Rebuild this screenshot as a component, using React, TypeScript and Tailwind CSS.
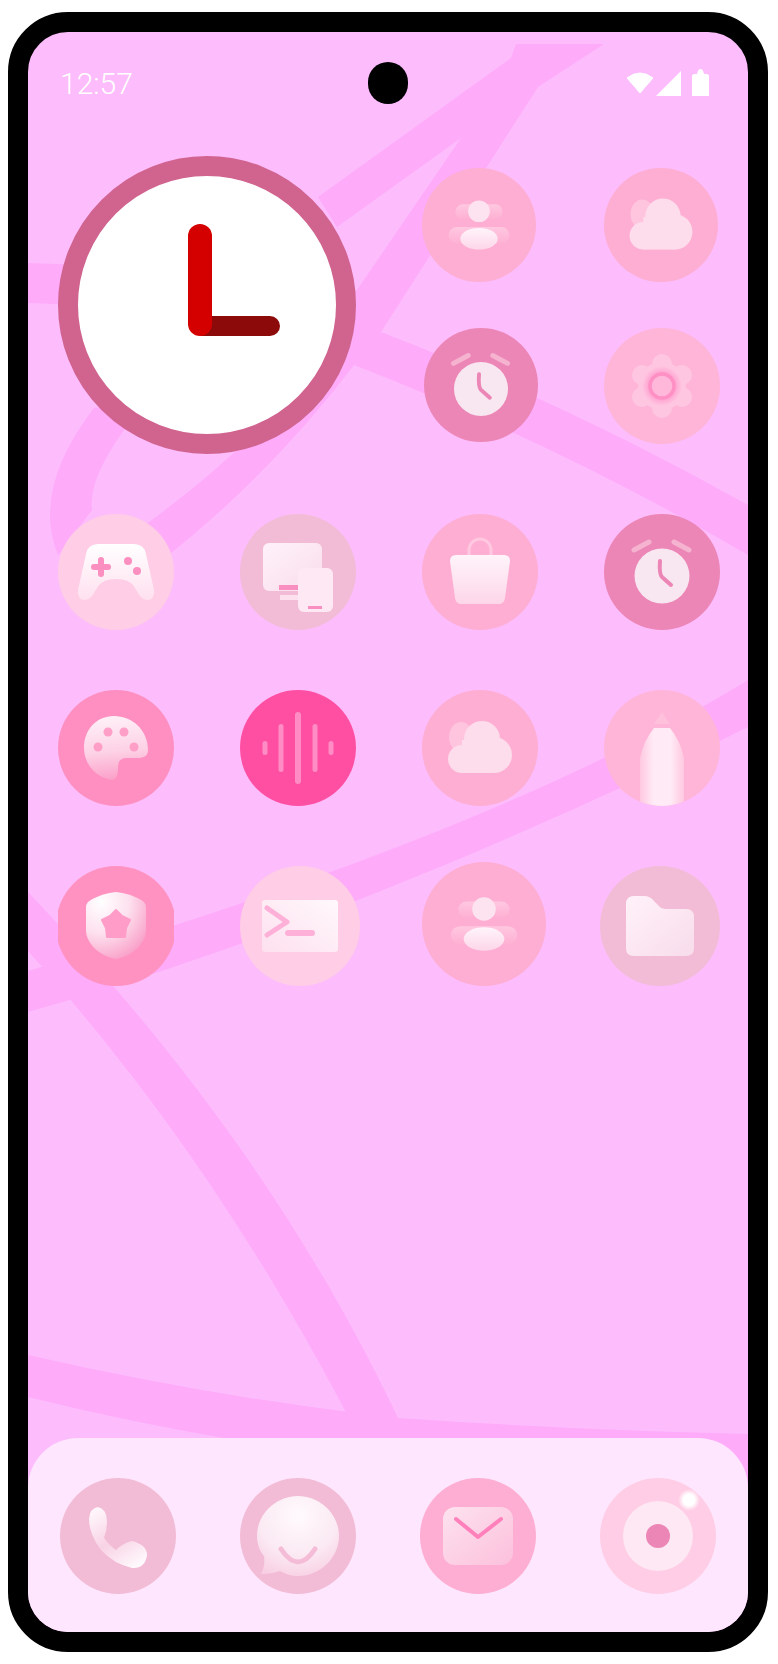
import React from "react"

type BadgeProps = {
  className: string
  box?: number
  children?: React.ReactNode
}

// round app icon, glyphs are drawn in a 116 box (120 for the slightly larger ones)
const Badge: React.FC<BadgeProps> = ({ className, box = 116, children }) => (
  <div className={`shrink-0 rounded-full overflow-hidden ${className}`}>
    <svg viewBox={`0 0 ${box} ${box}`} className="w-full h-full blur-[0.7px]">
      {children}
    </svg>
  </div>
)

const Gradients = () => (
  <svg className="absolute w-0 h-0">
    <defs>
      <linearGradient id="softDown" x1="0" y1="0" x2="0" y2="1">
        <stop offset="0" stopColor="#fff4fa" />
        <stop offset="1" stopColor="#fdd6e9" />
      </linearGradient>
      <linearGradient id="softDiag" x1="0" y1="0" x2="1" y2="1">
        <stop offset="0" stopColor="#fff2f9" />
        <stop offset="1" stopColor="#f8dceb" />
      </linearGradient>
      <linearGradient id="gameFill" x1="0" y1="0" x2="0" y2="1">
        <stop offset="0" stopColor="#ffffff" />
        <stop offset="1" stopColor="#ffe0ef" />
      </linearGradient>
      <linearGradient id="paletteFill" x1="0.4" y1="0" x2="0.5" y2="1">
        <stop offset="0" stopColor="#fff0f7" />
        <stop offset="0.55" stopColor="#fdd2e6" />
        <stop offset="1" stopColor="#fb9fc8" />
      </linearGradient>
      <linearGradient id="penFill" x1="0" y1="0" x2="1" y2="0">
        <stop offset="0" stopColor="#ffc8e0" />
        <stop offset="0.3" stopColor="#ffeaf5" />
        <stop offset="0.7" stopColor="#ffeaf5" />
        <stop offset="1" stopColor="#ffc8e0" />
      </linearGradient>
      <radialGradient id="shieldFill" cx="0.25" cy="0.15" r="0.95">
        <stop offset="0" stopColor="#ffffff" />
        <stop offset="0.5" stopColor="#fde0ee" />
        <stop offset="1" stopColor="#f99cc6" />
      </radialGradient>
      <linearGradient id="termFill" x1="1" y1="0" x2="0" y2="1">
        <stop offset="0" stopColor="#fff8fc" />
        <stop offset="1" stopColor="#fde0ee" />
      </linearGradient>
      <linearGradient id="handset" x1="0.2" y1="0" x2="0.8" y2="1">
        <stop offset="0" stopColor="#fff6fb" />
        <stop offset="0.5" stopColor="#f8d2e5" />
        <stop offset="1" stopColor="#fffafd" />
      </linearGradient>
      <radialGradient id="bubble" cx="0.5" cy="0.25" r="0.8">
        <stop offset="0" stopColor="#fffafd" />
        <stop offset="0.6" stopColor="#fbeaf3" />
        <stop offset="1" stopColor="#f8cfe3" />
      </radialGradient>
      <linearGradient id="mailFill" x1="0" y1="0" x2="1" y2="1">
        <stop offset="0" stopColor="#fde2ef" />
        <stop offset="1" stopColor="#fcc0dc" />
      </linearGradient>
      <radialGradient id="ringGlow">
        <stop offset="0.45" stopColor="#ff8fc6" />
        <stop offset="1" stopColor="#ff8fc6" stopOpacity="0" />
      </radialGradient>
      <radialGradient id="flash">
        <stop offset="0.5" stopColor="#ffffff" />
        <stop offset="1" stopColor="#ffffff" stopOpacity="0" />
      </radialGradient>
      <linearGradient id="sideFade" x1="0" y1="0" x2="0" y2="1">
        <stop offset="0" stopColor="#ffc8e1" />
        <stop offset="1" stopColor="#feb0d3" />
      </linearGradient>
    </defs>
  </svg>
)

const PersonGlyph = () => (
  <g>
    <rect x="34" y="37" width="48" height="15" rx="7.5" fill="url(#sideFade)" />
    <rect x="27" y="60" width="62" height="17" rx="8.5" fill="url(#sideFade)" />
    <circle cx="58" cy="44" r="11" fill="#fde3f0" />
    <ellipse cx="58" cy="72" rx="19" ry="11" fill="url(#softDown)" />
  </g>
)

const CloudGlyph = () => (
  <g>
    <ellipse cx="39" cy="47" rx="12" ry="15" fill="#ffc4de" />
    <g fill="#fddcec">
      <circle cx="60" cy="49" r="18" />
      <circle cx="72" cy="65" r="18" />
      <circle cx="40" cy="69" r="14" />
      <rect x="40" y="50" width="32" height="33" />
    </g>
  </g>
)

const AlarmGlyph = () => (
  <g>
    <path d="M30 36 L45 28 M70 28 L85 36" stroke="#f5b3d0" strokeWidth="5" strokeLinecap="round" fill="none" />
    <circle cx="58" cy="62" r="27.5" fill="#f8e6f0" />
    <path d="M56 47 Q55 60 58 63 L67 71" stroke="#ec86b6" strokeWidth="4" strokeLinecap="round" fill="none" />
  </g>
)

const FlowerGlyph = () => (
  <g>
    <g fill="#ffc6e1">
      <circle cx="58" cy="58" r="24" />
      <circle cx="58" cy="36" r="10" />
      <circle cx="58" cy="80" r="10" />
      <circle cx="38" cy="47" r="10" />
      <circle cx="78" cy="47" r="10" />
      <circle cx="38" cy="69" r="10" />
      <circle cx="78" cy="69" r="10" />
    </g>
    <circle cx="58" cy="58" r="20" fill="url(#ringGlow)" />
    <circle cx="58" cy="58" r="12" fill="#ffb8da" stroke="#ff90c6" strokeWidth="3.5" />
  </g>
)

const GameGlyph = () => (
  <g>
    <path
      d="M40 30 H76 Q86 30 88 40 L96 76 Q97 86 89 86 Q84 86 80 79 L75 71 Q70 65 58 65 Q46 65 41 71 L36 79 Q32 86 27 86 Q19 86 20 76 L28 40 Q30 30 40 30 Z"
      fill="url(#gameFill)"
    />
    <path d="M43 46 V60 M36 53 H50" stroke="#fb8fc0" strokeWidth="6" strokeLinecap="round" />
    <circle cx="70" cy="47" r="4" fill="#fb8fc0" />
    <circle cx="79" cy="57" r="4" fill="#fb8fc0" />
  </g>
)

const DevicesGlyph = () => (
  <g>
    <rect x="23" y="29" width="59" height="48" rx="6" fill="url(#softDiag)" />
    <rect x="39" y="71" width="20" height="5" fill="#f98fc0" />
    <rect x="40" y="81" width="20" height="5" fill="#fde0ee" />
    <rect x="58" y="54" width="35" height="44" rx="6" fill="#fde8f3" />
    <rect x="68" y="92" width="14" height="3" fill="#f98fc0" />
  </g>
)

const BagGlyph = () => (
  <g>
    <path d="M47 42 V36 A11 11 0 0 1 69 36 V42" stroke="#ffc8e0" strokeWidth="3" fill="none" />
    <path d="M34 41 H82 Q88 41 88 47 L83 84 Q82 90 77 90 H39 Q34 90 33 84 L28 47 Q28 41 34 41 Z" fill="url(#softDown)" />
  </g>
)

const PaletteGlyph = () => (
  <g>
    <path
      d="M56 26 C74 26 90 40 90 60 C90 66 86 68 80 68 L68 68 C62 68 60 72 60 78 C60 85 58 90 54 90 C38 88 26 74 26 58 C26 40 38 26 56 26 Z"
      fill="url(#paletteFill)"
    />
    <g fill="#ff9fc8">
      <circle cx="50" cy="42" r="4.5" />
      <circle cx="66" cy="42" r="4.5" />
      <circle cx="40" cy="57" r="4.5" />
      <circle cx="76" cy="57" r="4.5" />
    </g>
  </g>
)

const VoiceGlyph = () => (
  <g fill="#ff8cc4">
    <rect x="22.5" y="51" width="5" height="14" rx="2.5" />
    <rect x="38.5" y="34" width="5" height="48" rx="2.5" />
    <rect x="55" y="22" width="6" height="72" rx="3" />
    <rect x="72.5" y="34" width="5" height="48" rx="2.5" />
    <rect x="88.5" y="51" width="5" height="14" rx="2.5" />
  </g>
)

const PencilGlyph = () => (
  <g>
    <path d="M58 22 L66 34 H50 Z" fill="#ffc0dc" />
    <path d="M50 38 H66 Q76 50 80 68 V116 H36 V68 Q40 50 50 38 Z" fill="url(#penFill)" />
  </g>
)

const ShieldGlyph = () => (
  <g>
    <path d="M60 26 C70 27 82 31 88 36 Q90 38 90 42 V64 C90 78 76 90 60 93 C44 90 30 78 30 64 V42 Q30 38 32 36 C38 31 50 27 60 26 Z" fill="url(#shieldFill)" />
    <path d="M60 44 L66 50 L74 54 L70 62 L69 71 H51 L50 62 L46 54 L54 50 Z" fill="#ff9cc8" stroke="#ff9cc8" strokeWidth="2" strokeLinejoin="round" />
  </g>
)

const TerminalGlyph = () => (
  <g>
    <rect x="22" y="34" width="76" height="52" rx="3" fill="url(#termFill)" />
    <path d="M27 42 L47 56 L27 69" stroke="#ffb0d8" strokeWidth="5" strokeLinecap="round" strokeLinejoin="round" fill="none" />
    <path d="M48 67 H72" stroke="#ffb0d8" strokeWidth="6" strokeLinecap="round" />
  </g>
)

const FolderGlyph = () => (
  <path
    d="M34 30 H44 Q50 30 54 35 L60 41 Q62 43 68 43 H86 Q94 43 94 51 V82 Q94 90 86 90 H34 Q26 90 26 82 V38 Q26 30 34 30 Z"
    fill="url(#softDiag)"
  />
)

const PhoneGlyph = () => (
  <path
    d="M38 29 Q47 31 47 44 Q47 52 44 60 Q50 68 56 72 Q63 65 72 63 Q87 67 87 77 Q85 91 72 90 Q54 86 41 72 Q29 56 29 41 Q30 30 38 29 Z"
    fill="url(#handset)"
  />
)

const ChatGlyph = () => (
  <g>
    <path
      d="M58 18 C80 18 99 36 99 58 C99 80 80 98 58 98 C51 98 45 96 40 93 C35 95 28 96 21 96 C24 90 25 84 24 78 C19 72 17 65 17 58 C17 36 36 18 58 18 Z"
      fill="url(#bubble)"
    />
    <path d="M41 71 Q58 97 75 71" stroke="#f5bcd7" strokeWidth="5" strokeLinecap="round" fill="none" />
  </g>
)

const MailGlyph = () => (
  <g>
    <rect x="23" y="29" width="70" height="58" rx="12" fill="url(#mailFill)" />
    <path d="M36 41 L58 59 L81 41" stroke="#ff80ba" strokeWidth="4" strokeLinecap="round" strokeLinejoin="round" fill="none" />
  </g>
)

const CameraGlyph = () => (
  <g>
    <circle cx="58" cy="58" r="35" fill="#fde8f3" />
    <circle cx="58" cy="58" r="12" fill="#ec86b6" />
    <circle cx="89" cy="22" r="11" fill="url(#flash)" />
  </g>
)

// wallpaper streaks, the view box is in page coordinates
const Wallpaper = () => (
  <svg viewBox="28 32 720 1600" className="absolute inset-0 w-full h-full">
    <g fill="#feabfa">
      <path d="M516 44 H604 L538 87 L381 332 L354 365 Q270 475 165 558 L145 525 Q235 460 300 385 L337 300 L357 290 L461 138 L337 227 L318 197 L511 58 Z" />
      <path d="M381 332 Q570 405 748 505 V555 Q560 445 354 365 Z" />
      <path d="M28 263 L110 266 V306 L28 303 Z" />
      <path d="M94 408 Q50 465 50 515 Q50 535 58 555 L92 510 Q88 480 124 430 L150 400 Z" />
      <path d="M748 680 C560 795 300 890 28 971 V1012 C300 935 570 815 748 727 Z" />
      <path d="M28 892 C130 1000 280 1170 398 1418 H349 C240 1210 130 1065 28 951 Z" />
      <path d="M28 1355 Q190 1392 349 1412 L398 1418 Q575 1430 748 1434 V1500 H300 L224 1438 Q120 1420 28 1397 Z" />
    </g>
  </svg>
)

const StatusIcons = () => (
  <svg viewBox="0 0 83 28" className="w-[83px] h-[28px]">
    <path d="M1 9 Q14 -1 27 9 L14 24 Z" fill="#fff" stroke="#fff" strokeWidth="1" strokeLinejoin="round" />
    <path d="M30 27 L55 2 V27 Z" fill="#fff" />
    <path d="M66 27 V7 Q66 5 69 5 H71 Q72 0 74.5 0 Q77 0 78 5 H80 Q83 5 83 7 V27 Z" fill="#fff" />
  </svg>
)

const Clock = () => (
  <div className="w-[298px] h-[298px] rounded-full bg-white border-[20px] border-[#d1638f] shrink-0 relative">
    <div className="absolute left-[122px] top-[140px] w-[80px] h-[20px] rounded-r-[10px] bg-[#8c0a0a]" />
    <div className="absolute left-[110px] top-[48px] w-[24px] h-[112px] rounded-[12px] bg-[#d40000]" />
  </div>
)

export default function App() {
  return (
    <div className="w-[778px] h-[1664px] bg-white pt-[12px] pl-[8px]" style={{ fontFamily: "Roboto, sans-serif" }}>
      <Gradients />
      <div className="relative w-[760px] h-[1640px] border-[20px] border-black rounded-[60px] overflow-hidden bg-[#fdbcfc]">
        <Wallpaper />
        <div className="relative h-full flex flex-col">
          {/* status bar */}
          <div className="grid grid-cols-3 items-center h-[42px] mt-[30px] pl-[32px] pr-[39px]">
            <span className="text-[30px] leading-none font-light text-white pt-[2px]">12:57</span>
            <div className="flex justify-center ml-[7px]">
              <div className="w-[40px] h-[42px] rounded-full bg-black" />
            </div>
            <div className="flex justify-end">
              <StatusIcons />
            </div>
          </div>

          {/* clock and the first two rows */}
          <div className="flex ml-[30px] mt-[52px] h-[298px]">
            <Clock />
            <div className="ml-[66px] mt-[12px] flex flex-col">
              <div className="flex gap-[68px]">
                <Badge className="w-[114px] h-[114px] bg-[#feaed2]"><PersonGlyph /></Badge>
                <Badge className="w-[114px] h-[114px] bg-[#feaed2]"><CloudGlyph /></Badge>
              </div>
              <div className="flex gap-[66px] mt-[46px] ml-[2px]">
                <Badge className="w-[114px] h-[114px] bg-[#ec86b6]"><AlarmGlyph /></Badge>
                <Badge className="w-[116px] h-[116px] bg-[#ffb5d8]"><FlowerGlyph /></Badge>
              </div>
            </div>
          </div>

          <div className="grid grid-cols-[repeat(4,116px)] gap-x-[66px] gap-y-[60px] ml-[30px] mt-[60px]">
            <Badge className="w-[116px] h-[116px] bg-[#ffcde5]"><GameGlyph /></Badge>
            <Badge className="w-[116px] h-[116px] bg-[#f3bcd6]"><DevicesGlyph /></Badge>
            <Badge className="w-[116px] h-[116px] bg-[#feaed2]"><BagGlyph /></Badge>
            <Badge className="w-[116px] h-[116px] bg-[#ec86b6]"><AlarmGlyph /></Badge>
            <Badge className="w-[116px] h-[116px] bg-[#ff8fc0]"><PaletteGlyph /></Badge>
            <Badge className="w-[116px] h-[116px] bg-[#ff4fa3]"><VoiceGlyph /></Badge>
            <Badge className="w-[116px] h-[116px] bg-[#feaed2]"><CloudGlyph /></Badge>
            <Badge className="w-[116px] h-[116px] bg-[#ffb5d8]"><PencilGlyph /></Badge>
          </div>

          <div className="flex items-end ml-[30px] mt-[56px]">
            {/* the shield tile is clipped by its own box on both sides */}
            <div className="w-[116px] h-[120px] overflow-hidden flex justify-center">
              <Badge box={120} className="w-[120px] h-[120px] bg-[#ff92c0]"><ShieldGlyph /></Badge>
            </div>
            <Badge box={120} className="w-[120px] h-[120px] ml-[66px] bg-[#ffcde5]"><TerminalGlyph /></Badge>
            <Badge className="w-[124px] h-[124px] ml-[62px] bg-[#feaed2]"><PersonGlyph /></Badge>
            <Badge box={120} className="w-[120px] h-[120px] ml-[54px] bg-[#f3bcd6]"><FolderGlyph /></Badge>
          </div>

          {/* dock */}
          <div className="mt-auto h-[194px] rounded-t-[50px] bg-[#fee7fe] flex gap-[64px] pt-[40px] pl-[32px]">
            <Badge className="w-[116px] h-[116px] bg-[#f3bcd6]"><PhoneGlyph /></Badge>
            <Badge className="w-[116px] h-[116px] bg-[#f3bcd6]"><ChatGlyph /></Badge>
            <Badge className="w-[116px] h-[116px] bg-[#feaed2]"><MailGlyph /></Badge>
            <Badge className="w-[116px] h-[116px] bg-[#ffcde5]"><CameraGlyph /></Badge>
          </div>
        </div>
      </div>
    </div>
  )
}
